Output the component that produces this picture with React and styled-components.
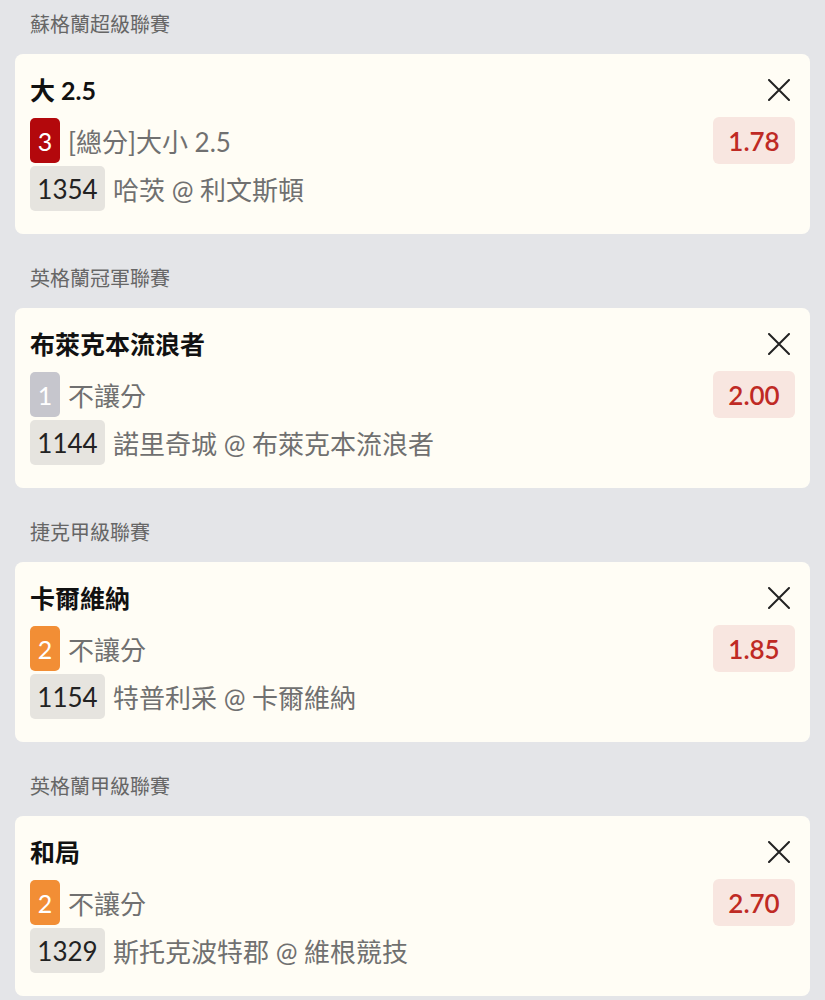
import React from "react";
import styled, { createGlobalStyle } from "styled-components";

const Global = createGlobalStyle`
  html, body { margin: 0; padding: 0; background: #e4e5e8; }
  body { font-family: "Lato", "Noto Sans CJK TC", sans-serif; }
`;

const Page = styled.div`
  padding: 0 15px;
  background: #e4e5e8;
  min-height: 1000px;
`;

const LeagueHeader = styled.div`
  padding: 10px 15px 16px;
  font-size: 20px;
  line-height: 28px;
  color: #666;
`;

const Card = styled.div`
  background: #fffdf5;
  border-radius: 8px;
  padding: 20px 15px 23px;
  margin-bottom: 20px;
`;

const TitleRow = styled.div`
  display: flex;
  align-items: center;
  justify-content: space-between;
  height: 32px;
`;

const Title = styled.div`
  font-size: 25px;
  font-weight: 700;
  color: #111;
  line-height: 32px;
`;

const CloseButton = styled.button`
  border: 0;
  background: none;
  padding: 0;
  margin-right: 4px;
  width: 24px;
  height: 24px;
  display: flex;
  align-items: center;
  justify-content: center;
  cursor: pointer;
`;

const Lines = styled.div`
  margin-top: 12px;
  display: flex;
  flex-direction: column;
  gap: 3px;
`;

const Line = styled.div`
  display: flex;
  align-items: center;
  height: 45px;
  gap: 8px;
`;

const BADGE_COLORS = {
  red: "#b3080c",
  gray: "#c6c6cd",
  orange: "#f28e35",
};

const Badge = styled.span`
  width: 30px;
  height: 45px;
  border-radius: 5px;
  background: ${(p) => BADGE_COLORS[p.$tone]};
  color: #fff;
  font-size: 25px;
  display: flex;
  align-items: center;
  justify-content: center;
`;

const Market = styled.span`
  flex: 1;
  font-size: 26px;
  color: #707070;
`;

const Odds = styled.span`
  width: 82px;
  height: 47px;
  border-radius: 6px;
  background: #f8e6e0;
  color: #bf2a24;
  font-size: 26px;
  font-weight: 600;
  display: flex;
  align-items: center;
  justify-content: center;
`;

const MatchId = styled.span`
  width: 75px;
  height: 45px;
  border-radius: 5px;
  background: #e6e4df;
  color: #222;
  font-size: 26px;
  display: flex;
  align-items: center;
  justify-content: center;
`;

const Teams = styled.span`
  font-size: 26px;
  color: #707070;
`;

const CloseIcon = () => (
  <svg width="22" height="22" viewBox="0 0 22 22" fill="none">
    <path d="M1 1L21 21M21 1L1 21" stroke="#222" strokeWidth="2" strokeLinecap="round" />
  </svg>
);

const bets = [
  { league: "蘇格蘭超級聯賽", title: "大 2.5", badge: "3", tone: "red", market: "[總分]大小 2.5", odds: "1.78", id: "1354", teams: "哈茨 @ 利文斯頓" },
  { league: "英格蘭冠軍聯賽", title: "布萊克本流浪者", badge: "1", tone: "gray", market: "不讓分", odds: "2.00", id: "1144", teams: "諾里奇城 @ 布萊克本流浪者" },
  { league: "捷克甲級聯賽", title: "卡爾維納", badge: "2", tone: "orange", market: "不讓分", odds: "1.85", id: "1154", teams: "特普利采 @ 卡爾維納" },
  { league: "英格蘭甲級聯賽", title: "和局", badge: "2", tone: "orange", market: "不讓分", odds: "2.70", id: "1329", teams: "斯托克波特郡 @ 維根競技" },
];

export default function App() {
  return (
    <>
      <Global />
      <Page>
        {bets.map((b, i) => (
          <section key={i}>
            <LeagueHeader>{b.league}</LeagueHeader>
            <Card>
              <TitleRow>
                <Title>{b.title}</Title>
                <CloseButton aria-label="remove"><CloseIcon /></CloseButton>
              </TitleRow>
              <Lines>
                <Line>
                  <Badge $tone={b.tone}>{b.badge}</Badge>
                  <Market>{b.market}</Market>
                  <Odds>{b.odds}</Odds>
                </Line>
                <Line>
                  <MatchId>{b.id}</MatchId>
                  <Teams>{b.teams}</Teams>
                </Line>
              </Lines>
            </Card>
          </section>
        ))}
      </Page>
    </>
  );
}
